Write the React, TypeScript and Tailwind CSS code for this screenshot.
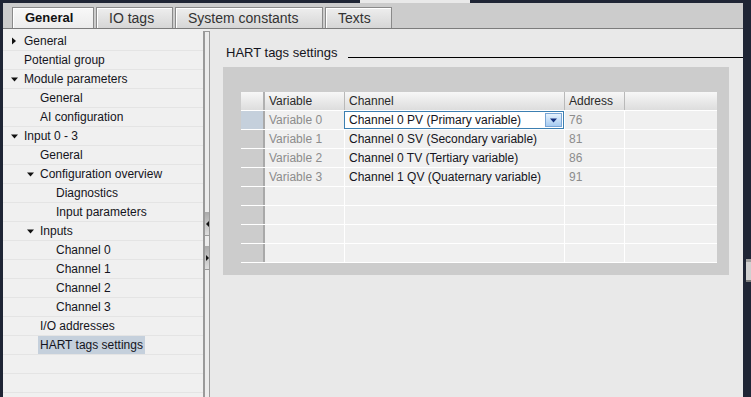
import React from 'react';

type Node = {
  label: string;
  level: number;
  arrow?: 'right' | 'down';
  selected?: boolean;
};

const tree: Node[] = [
  { label: 'General', level: 0, arrow: 'right' },
  { label: 'Potential group', level: 0 },
  { label: 'Module parameters', level: 0, arrow: 'down' },
  { label: 'General', level: 1 },
  { label: 'AI configuration', level: 1 },
  { label: 'Input 0 - 3', level: 0, arrow: 'down' },
  { label: 'General', level: 1 },
  { label: 'Configuration overview', level: 1, arrow: 'down' },
  { label: 'Diagnostics', level: 2 },
  { label: 'Input parameters', level: 2 },
  { label: 'Inputs', level: 1, arrow: 'down' },
  { label: 'Channel 0', level: 2 },
  { label: 'Channel 1', level: 2 },
  { label: 'Channel 2', level: 2 },
  { label: 'Channel 3', level: 2 },
  { label: 'I/O addresses', level: 1 },
  { label: 'HART tags settings', level: 1, selected: true },
];

const indent = ['pl-[8px]', 'pl-[24px]', 'pl-[40px]'];

const rows = [
  { variable: 'Variable 0', channel: 'Channel 0 PV (Primary variable)', address: '76' },
  { variable: 'Variable 1', channel: 'Channel 0 SV (Secondary variable)', address: '81' },
  { variable: 'Variable 2', channel: 'Channel 0 TV (Tertiary variable)', address: '86' },
  { variable: 'Variable 3', channel: 'Channel 1 QV (Quaternary variable)', address: '91' },
];

const tabs = [
  { label: 'General', w: 'w-[82px]', active: true },
  { label: 'IO tags', w: 'w-[77px]' },
  { label: 'System constants', w: 'w-[148px]' },
  { label: 'Texts', w: 'w-[67px]' },
];

function Arrow({ dir }: { dir?: 'right' | 'down' }) {
  if (dir === 'right')
    return (
      <svg width="5" height="8" className="ml-[1px]">
        <path d="M0 0.5 L4 4 L0 7.5 Z" fill="#111" />
      </svg>
    );
  if (dir === 'down')
    return (
      <svg width="8" height="5">
        <path d="M0 0.5 L7 0.5 L3.5 4.5 Z" fill="#111" />
      </svg>
    );
  return null;
}

function TreeRow({ node }: { node?: Node }) {
  return (
    <div className={`h-[19px] shrink-0 border-b border-[#e4e4e4] flex items-center ${node ? indent[node.level] : ''}`}>
      {node && (
        <>
          <div className="w-[13px] flex items-center">
            <Arrow dir={node.arrow} />
          </div>
          <span
            className={`leading-[18px] h-[18px] whitespace-nowrap ${
              node.selected ? 'bg-[#c5d0dc] -ml-[2px] px-[2px]' : ''
            }`}
          >
            {node.label}
          </span>
        </>
      )}
    </div>
  );
}

export default function App() {
  return (
    <div className="w-[751px] h-[397px] flex bg-[#1f2535] overflow-hidden font-['Liberation_Sans',Arial,sans-serif] text-[12px] text-[#141420]">
      {/* left frame edge */}
      <div className="w-[3px] shrink-0" />

      <div className="w-[740px] flex flex-col">
        {/* top strip */}
        <div className="h-[3px] flex shrink-0">
          <div className="w-[357px]" />
          <div className="w-[110px] bg-[#e9e9e9]" />
          <div className="flex-1" />
        </div>

        {/* Tabs */}
        <div className="h-[26px] shrink-0 bg-[#cccccc] border-b border-[#7c7c7c] flex items-end gap-[2px] pl-[9px]">
          {tabs.map((t) => (
            <div
              key={t.label}
              className={`${t.w} h-[21px] flex items-center pl-[12px] border border-b-0 border-[#8a8a8a] shadow-[inset_1px_1px_0_#ffffff] ${
                t.active
                  ? 'bg-gradient-to-b from-[#f8f8f8] to-[#ececec] font-bold text-[13px] text-[#111]'
                  : 'bg-gradient-to-b from-[#eeeeee] to-[#d6d6d6] text-[14px] text-[#333]'
              }`}
            >
              {t.label}
            </div>
          ))}
        </div>

        {/* Main */}
        <div className="flex-1 flex min-h-0">
          {/* Tree */}
          <div className="w-[200px] shrink-0 bg-[#f0f0f0] pt-[3px] flex flex-col overflow-hidden">
            {tree.map((n, i) => (
              <TreeRow key={i} node={n} />
            ))}
            <TreeRow />
            <TreeRow />
            <TreeRow />
          </div>

          {/* Splitter */}
          <div className="w-[7px] shrink-0 bg-[#f0f0f0] pt-[2px] flex">
            <div className="flex-1 border-l-2 border-r border-t border-[#9a9a9a] bg-[#ececec] flex flex-col pt-[180px]">
              <div className="h-[24px] border-b border-[#9a9a9a] bg-gradient-to-b from-[#a9a9a9] to-[#dedede] flex items-center justify-center">
                <svg width="3" height="6">
                  <path d="M3 0 L0 3 L3 6 Z" fill="#111" />
                </svg>
              </div>
              <div className="h-[10px]" />
              <div className="h-[24px] border-b border-[#9a9a9a] bg-gradient-to-b from-[#a9a9a9] to-[#dedede] flex items-center justify-center">
                <svg width="3" height="6">
                  <path d="M0 0 L3 3 L0 6 Z" fill="#111" />
                </svg>
              </div>
            </div>
          </div>

          {/* Content */}
          <div className="flex-1 bg-[#e9e9e9] pt-[17px] flex flex-col">
            <div className="h-[14px] flex items-end pl-[16px]">
              <span className="text-[13px] leading-[14px] whitespace-nowrap">HART tags settings</span>
              <div className="flex-1 h-px bg-black ml-[10px] mb-[2px]" />
            </div>

            <div className="mt-[7px] ml-[13px] mr-[14px] h-[208px] bg-[#cccccc] pt-[25px] pl-[18px] pr-[12px]">
              {/* Header */}
              <div className="h-[19px] flex border-b border-white bg-gradient-to-b from-[#f7f7f7] to-[#dddddd] text-[#2a2a2a]">
                <div className="w-[24px] border-r-2 border-[#b0b0b0]" />
                <div className="w-[80px] border-r border-[#b9b9b9] pl-[4px] leading-[18px]">Variable</div>
                <div className="w-[220px] border-r border-[#b9b9b9] pl-[4px] leading-[18px]">Channel</div>
                <div className="w-[60px] border-r border-[#b9b9b9] pl-[4px] leading-[18px]">Address</div>
                <div className="flex-1" />
              </div>

              {/* Rows */}
              {Array.from({ length: 8 }).map((_, i) => {
                const r = rows[i];
                return (
                  <div key={i} className="h-[19px] flex border-b border-white">
                    <div
                      className={`w-[24px] border-r-2 border-[#a9a9a9] ${
                        i === 0 ? 'bg-[#c5d0dc]' : 'bg-[#cccccc]'
                      }`}
                    />
                    <div className="w-[80px] bg-[#f0f0f0] border-r border-white pl-[4px] leading-[18px] text-[#8c8c8c]">
                      {r?.variable}
                    </div>
                    <div className="w-[220px] bg-[#f0f0f0] border-r border-white leading-[18px] whitespace-nowrap">
                      {i === 0 ? (
                        <div className="h-[18px] -ml-px bg-white border border-[#3c7fb1] flex items-center pl-[4px]">
                          <span className="flex-1 leading-[16px]">{r.channel}</span>
                          <div className="w-[17px] h-[14px] mr-px bg-gradient-to-b from-[#e6f2fd] to-[#a6cbf1] border border-[#7aa6d6] flex items-center justify-center">
                            <svg width="8" height="5">
                              <path d="M0 0.5 L7 0.5 L3.5 4.5 Z" fill="#15317e" />
                            </svg>
                          </div>
                        </div>
                      ) : (
                        <span className="pl-[4px]">{r?.channel}</span>
                      )}
                    </div>
                    <div className="w-[60px] bg-[#f0f0f0] border-r border-white pl-[4px] leading-[18px] text-[#8c8c8c]">
                      {r?.address}
                    </div>
                    <div className="flex-1 bg-[#f0f0f0]" />
                  </div>
                );
              })}
            </div>
          </div>
        </div>
      </div>

      {/* right frame edge */}
      <div className="w-[8px] shrink-0 flex">
        <div className="w-[3px]" />
        <div className="flex-1 flex flex-col">
          <div className="h-[259px]" />
          <div className="h-[3px] bg-[#a0a0a0]" />
          <div className="h-[18px] bg-[#d0d0d0]" />
          <div className="h-[2px] bg-[#7a7a7a]" />
        </div>
      </div>
    </div>
  );
}
